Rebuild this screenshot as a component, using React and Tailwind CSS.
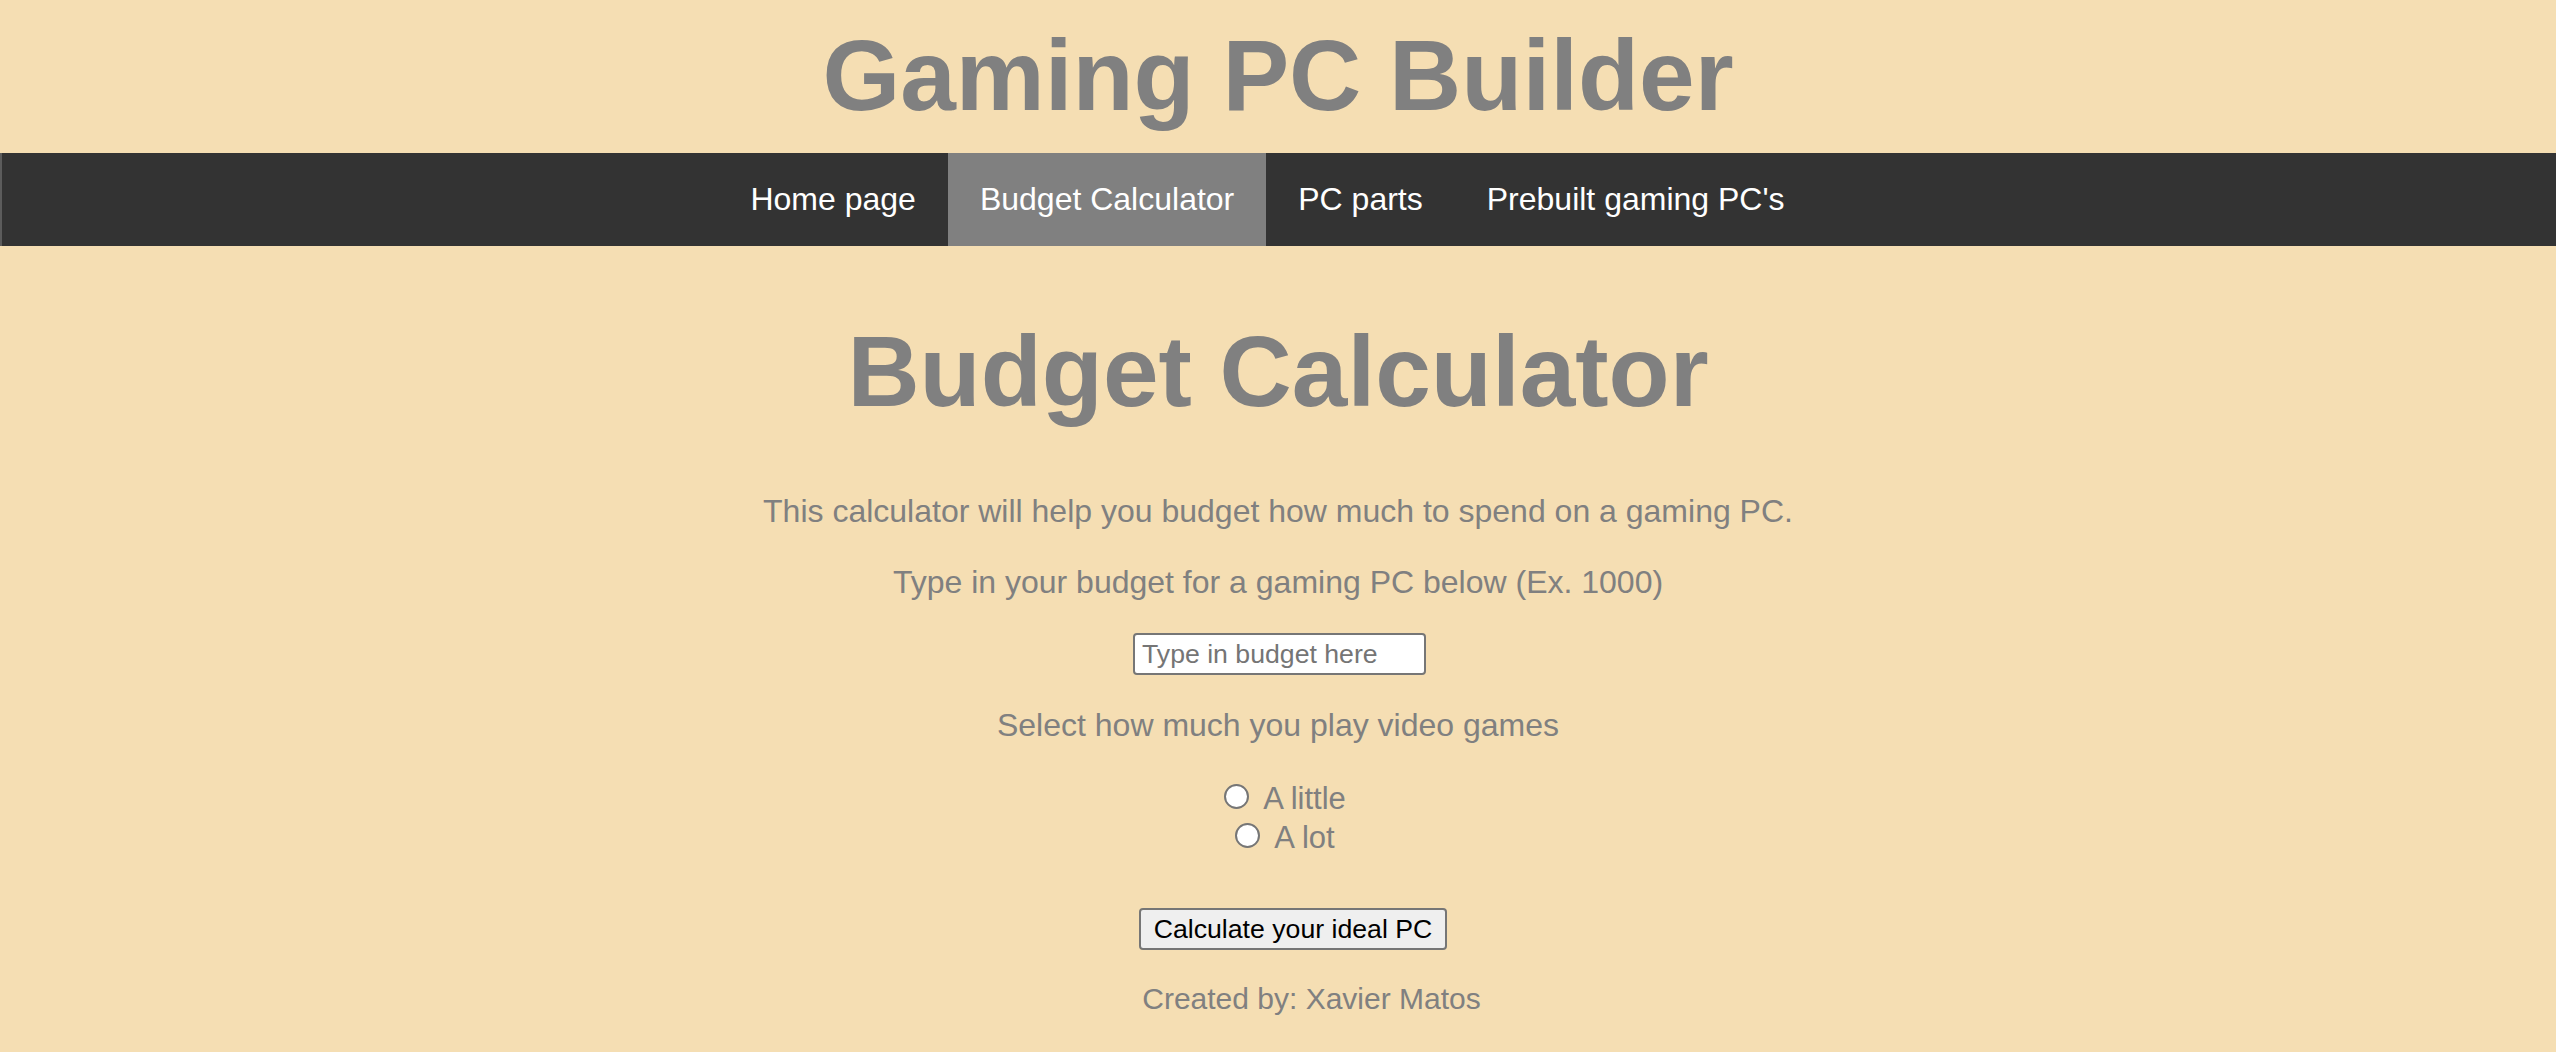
import { useState } from "react";

const links = [
  { label: "Home page", href: "#" },
  { label: "Budget Calculator", href: "#", active: true },
  { label: "PC parts", href: "#" },
  { label: "Prebuilt gaming PC's", href: "#" },
];

export default function App() {
  const [budget, setBudget] = useState("");
  const [amount, setAmount] = useState("");

  return (
    <div className="min-h-screen w-full bg-[#f5deb3] text-[#808080] font-['Liberation_Sans',Arial,sans-serif] flex flex-col">
      <h1 className="mt-[18px] text-center text-[100px] leading-[115px] font-bold">
        Gaming PC Builder
      </h1>

      {/* Nav bar */}
      <nav className="mt-[20px] bg-[#333333] border-l-2 border-[#5c5c5c]">
        <ul className="flex justify-center pr-[23px]">
          {links.map((link) => (
            <li key={link.label}>
              <a
                href={link.href}
                className={`block px-[32px] py-[28px] text-[32px] leading-[37px] text-white ${
                  link.active ? "bg-[#808080]" : "hover:bg-[#111111]"
                }`}
              >
                {link.label}
              </a>
            </li>
          ))}
        </ul>
      </nav>

      <main className="flex flex-col items-center text-center">
        <h2 className="mt-[68px] text-[100px] leading-[115px] font-bold">
          Budget Calculator
        </h2>

        <p className="mt-[64px] text-[32px] leading-[37px]">
          This calculator will help you budget how much to spend on a gaming PC.
        </p>
        <p className="mt-[34px] text-[32px] leading-[37px]">
          Type in your budget for a gaming PC below (Ex. 1000)
        </p>

        <input
          type="text"
          value={budget}
          onChange={(e) => setBudget(e.target.value)}
          placeholder="Type in budget here"
          className="mt-[32px] ml-[3px] w-[293px] h-[42px] pl-[7px] pr-[4px] bg-white border-2 border-[#767676] rounded-[4px] text-[26.67px] text-black placeholder:text-[#757575] outline-none"
        />

        <p className="mt-[32px] text-[32px] leading-[37px]">
          Select how much you play video games
        </p>

        {/* Radio options */}
        <div className="mt-[35px] flex flex-col items-center pl-[14px]">
          {[
            { id: "little", label: "A little" },
            { id: "lot", label: "A lot" },
          ].map((opt) => (
            <label
              key={opt.id}
              htmlFor={opt.id}
              className="flex items-center h-[39px] text-[31px] leading-[39px] cursor-pointer"
            >
              <input
                id={opt.id}
                type="radio"
                name="amount"
                checked={amount === opt.id}
                onChange={() => setAmount(opt.id)}
                className="appearance-none mb-[5px] mr-[14px] w-[25px] h-[25px] rounded-full border-2 border-[#767676] bg-white checked:bg-[#1a73e8] cursor-pointer"
              />
              {opt.label}
            </label>
          ))}
        </div>

        <div className="mt-[51px] pl-[30px]">
          <button
            type="button"
            className="h-[42px] px-[13px] bg-[#efefef] border-2 border-[#767676] rounded-[4px] text-[26.67px] leading-[30px] text-black"
          >
            Calculate your ideal PC
          </button>
        </div>

        <p className="mt-[31px] pl-[67px] text-[30px] leading-[35px]">
          Created by: Xavier Matos
        </p>
      </main>
    </div>
  );
}
